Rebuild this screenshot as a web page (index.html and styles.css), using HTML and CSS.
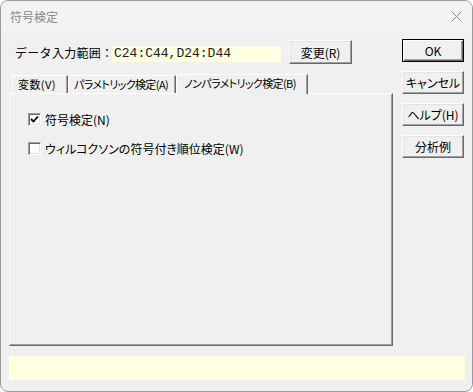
FILE: index.html
```html
<!DOCTYPE html>
<html lang="ja">
<head>
    <meta charset="UTF-8">
    <meta name="viewport" content="width=device-width, initial-scale=1.0">
    <title>符号検定</title>
    <link rel="stylesheet" href="styles.css">
</head>
<body>

    <div class="dialog">
        <div class="titlebar">
            <span class="title">符号検定</span>
            <svg class="close" width="11" height="11" viewBox="0 0 11 11">
                <path d="M0.5 0.5 L10.5 10.5 M10.5 0.5 L0.5 10.5" stroke="#8a8a8a" stroke-width="1" fill="none"/>
            </svg>
        </div>

        <div class="client">
            <div class="main">
                <div class="left">
                    <div class="range-row">
                        <span class="range-label">データ入力範囲：</span>
                        <span class="range-field">C24:C44,D24:D44</span>
                        <button class="btn btn-change">変更(R)</button>
                    </div>

                    <div class="tabs">
                        <div class="tab tab-1">変数(V)</div>
                        <div class="tab tab-2">パラメトリック検定(A)</div>
                        <div class="tab tab-active">ノンパラメトリック検定(B)</div>
                    </div>

                    <div class="panel">
                        <label class="check">
                            <span class="box">
                                <svg width="9" height="9" viewBox="0 0 9 9">
                                    <path d="M1 4 L3.5 6.5 L8 1.5" stroke="#000" stroke-width="1.8" fill="none"/>
                                </svg>
                            </span>
                            <span>符号検定(N)</span>
                        </label>
                        <label class="check">
                            <span class="box"></span>
                            <span>ウィルコクソンの符号付き順位検定(W)</span>
                        </label>
                    </div>
                </div>

                <div class="side">
                    <button class="btn btn-default">OK</button>
                    <button class="btn">キャンセル</button>
                    <button class="btn">ヘルプ(H)</button>
                    <button class="btn">分析例</button>
                </div>
            </div>

            <div class="status"></div>
        </div>
    </div>

</body>
</html>
```

FILE: styles.css
```css
body {
    margin: 0;
    background-color: #ffffff;
    font-family: "Noto Sans CJK JP", "Noto Sans", sans-serif;
    font-size: 12px;
    color: #000;
}
.dialog {
    width: 473px;
    height: 392px;
    box-sizing: border-box;
    border: 1px solid #9c9c9c;
    border-radius: 8px;
    background-color: #f0f0f0;
    overflow: hidden;
}
.titlebar {
    height: 30px;
    display: flex;
    align-items: center;
    justify-content: space-between;
    padding: 0 10px 0 9px;
    background-color: #f3f3f3;
}
.title {
    color: #8a8a8a;
    font-size: 12px;
}
.client {
    padding: 8px 0 0 8px;
}
.main {
    display: flex;
}
.left {
    width: 384px;
    padding-top: 1px;
}
.range-row {
    display: flex;
    align-items: center;
    height: 24px;
    padding-left: 6px;
}
.range-label {
    width: 97px;
    white-space: nowrap;
    letter-spacing: 0.3px;
}
.range-field {
    width: 167px;
    height: 16px;
    padding-left: 2px;
    margin-top: 4px;
    background-color: #ffffe1;
    font-family: "Liberation Mono", "DejaVu Sans Mono", monospace;
    font-size: 13px;
    line-height: 16px;
    color: #1a1a1a;
}
.btn {
    box-sizing: border-box;
    height: 23px;
    padding: 0;
    font-family: inherit;
    font-size: 12px;
    color: #000;
    background-color: #f0f0f0;
    border: 1px solid;
    border-color: #ffffff #696969 #696969 #ffffff;
    box-shadow: inset -1px -1px #a0a0a0, inset 1px 1px #e3e3e3;
    font-feature-settings: "palt" 1;
}
.btn-change {
    width: 63px;
    height: 24px;
    margin-left: 8px;
}
.btn-default {
    border-color: #000;
    box-shadow: inset 1px 1px #ffffff, inset -1px -1px #696969, inset -2px -2px #a0a0a0;
}
.tabs {
    display: flex;
    align-items: flex-end;
    height: 20px;
    margin-top: 9px;
    padding-left: 3px;
    font-size: 11px;
    letter-spacing: -0.6px;
    white-space: nowrap;
    font-feature-settings: "palt" 1;
}
.tab {
    box-sizing: border-box;
    height: 18px;
    line-height: 16px;
    padding-left: 5px;
    overflow: hidden;
    border-top: 1px solid #ffffff;
    border-left: 1px solid #ffffff;
    border-right: 1px solid #696969;
    box-shadow: inset -1px 0 #a0a0a0;
}
.tab-1 {
    width: 56px;
    letter-spacing: 0.4px;
}
.tab-2 {
    width: 108px;
}
.tab-active {
    width: 132px;
    height: 20px;
    line-height: 17px;
    padding-left: 7px;
    position: relative;
    top: 1px;
    background-color: #f0f0f0;
}
.panel {
    box-sizing: border-box;
    height: 253px;
    padding: 19px 0 0 18px;
    border-top: 1px solid #ffffff;
    border-left: 1px solid #ffffff;
    border-right: 1px solid #696969;
    border-bottom: 1px solid #696969;
    box-shadow: inset -1px -1px #a0a0a0;
}
.check {
    display: flex;
    align-items: center;
    height: 13px;
    margin-bottom: 16px;
    white-space: nowrap;
    font-feature-settings: "palt" 1;
}
.box {
    box-sizing: border-box;
    width: 13px;
    height: 13px;
    margin-right: 4px;
    display: flex;
    align-items: center;
    justify-content: center;
    background-color: #ffffff;
    border: 1px solid;
    border-color: #a0a0a0 #ffffff #ffffff #a0a0a0;
    box-shadow: inset 1px 1px #696969, inset -1px -1px #e3e3e3;
}
.side {
    display: flex;
    flex-direction: column;
    gap: 9px;
    width: 62px;
    margin-left: 9px;
}
.status {
    width: 456px;
    height: 24px;
    margin-top: 10px;
    background-color: #ffffe1;
}
```
